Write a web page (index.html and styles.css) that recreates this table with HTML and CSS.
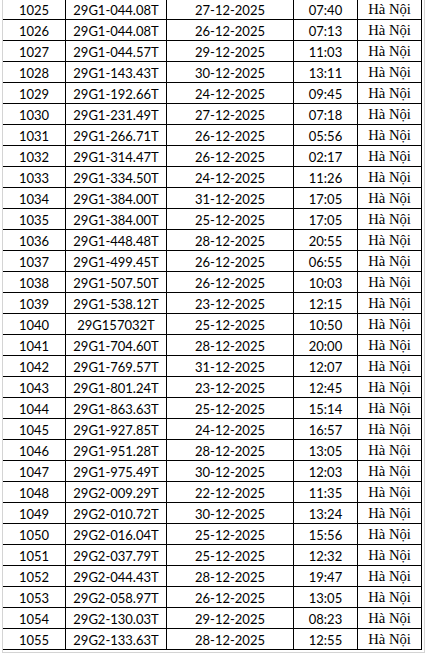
FILE: index.html
```html
<!DOCTYPE html>
<html>
<head>
<meta charset="utf-8">
<link rel="stylesheet" href="styles.css">
</head>
<body>
<div class="sheet">
  <div class="table" id="t"></div>
</div>
<script>
const rows = [
["1025","29G1-044.08T","27-12-2025","07:40"],
["1026","29G1-044.08T","26-12-2025","07:13"],
["1027","29G1-044.57T","29-12-2025","11:03"],
["1028","29G1-143.43T","30-12-2025","13:11"],
["1029","29G1-192.66T","24-12-2025","09:45"],
["1030","29G1-231.49T","27-12-2025","07:18"],
["1031","29G1-266.71T","26-12-2025","05:56"],
["1032","29G1-314.47T","26-12-2025","02:17"],
["1033","29G1-334.50T","24-12-2025","11:26"],
["1034","29G1-384.00T","31-12-2025","17:05"],
["1035","29G1-384.00T","25-12-2025","17:05"],
["1036","29G1-448.48T","28-12-2025","20:55"],
["1037","29G1-499.45T","26-12-2025","06:55"],
["1038","29G1-507.50T","26-12-2025","10:03"],
["1039","29G1-538.12T","23-12-2025","12:15"],
["1040","29G157032T","25-12-2025","10:50"],
["1041","29G1-704.60T","28-12-2025","20:00"],
["1042","29G1-769.57T","31-12-2025","12:07"],
["1043","29G1-801.24T","23-12-2025","12:45"],
["1044","29G1-863.63T","25-12-2025","15:14"],
["1045","29G1-927.85T","24-12-2025","16:57"],
["1046","29G1-951.28T","28-12-2025","13:05"],
["1047","29G1-975.49T","30-12-2025","12:03"],
["1048","29G2-009.29T","22-12-2025","11:35"],
["1049","29G2-010.72T","30-12-2025","13:24"],
["1050","29G2-016.04T","25-12-2025","15:56"],
["1051","29G2-037.79T","25-12-2025","12:32"],
["1052","29G2-044.43T","28-12-2025","19:47"],
["1053","29G2-058.97T","26-12-2025","13:05"],
["1054","29G2-130.03T","29-12-2025","08:23"],
["1055","29G2-133.63T","28-12-2025","12:55"]
];
const t = document.getElementById('t');
for (const r of rows) {
  const row = document.createElement('div');
  row.className = 'row';
  r.forEach(v => {
    const c = document.createElement('div');
    c.className = 'cell';
    c.textContent = v;
    row.appendChild(c);
  });
  const c = document.createElement('div');
  c.className = 'cell city';
  c.textContent = 'Hà Nội';
  row.appendChild(c);
  t.appendChild(row);
}
</script>
</body>
</html>
```
FILE: styles.css
```css
html, body {
  margin: 0;
  padding: 0;
  background: #fff;
}
.sheet {
  margin-left: 2px;
  width: 421px;
  border-left: 1px solid #d4d4d4;
  border-right: 1px solid #d4d4d4;
  border-bottom: 1px solid #d4d4d4;
  padding-bottom: 2px;
  overflow: hidden;
}
.table {
  margin-top: -1px;
  width: 419px;
}
.row {
  display: grid;
  grid-template-columns: 63px 101px 127px 64px 64px;
  height: 21px;
}
.cell {
  box-sizing: border-box;
  border-right: 1px solid #000;
  border-bottom: 1px solid #000;
  display: flex;
  align-items: flex-end;
  justify-content: center;
  font-family: Lato, "Liberation Sans", sans-serif;
  font-size: 13px;
  line-height: 13px;
  padding-bottom: 2px;
  color: #000;
  white-space: nowrap;
}
.cell:first-child {
  border-right: 1px solid #000;
}
.city {
  font-family: "Liberation Serif", serif;
  font-size: 14.67px;
  line-height: 15px;
  padding-bottom: 2px;
}
```
